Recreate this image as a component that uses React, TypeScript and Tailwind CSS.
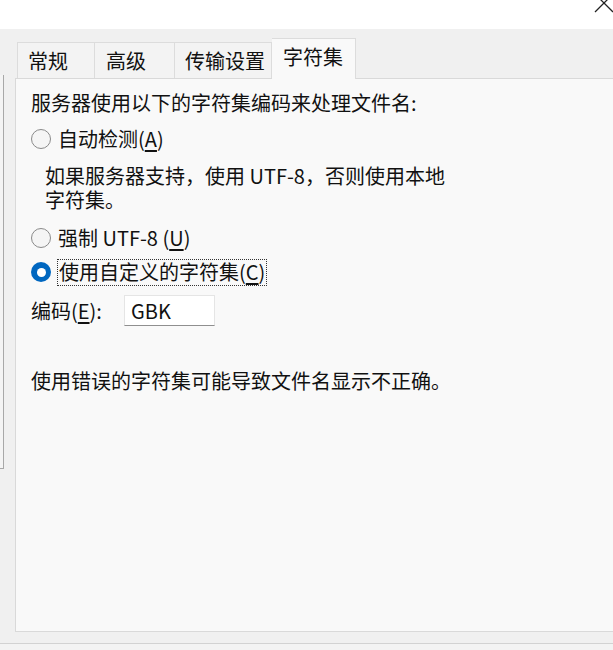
import React from "react";

const font = { fontFamily: '"Noto Sans CJK SC", "Noto Sans", sans-serif' };

function Radio({ checked }: { checked?: boolean }) {
  if (checked) {
    return (
      <span className="w-[20px] h-[20px] rounded-full bg-[#0067c0] flex items-center justify-center shrink-0">
        <span className="w-[9px] h-[9px] rounded-full bg-white" />
      </span>
    );
  }
  return (
    <span className="w-[20px] h-[20px] rounded-full border border-[#8a8a8a] bg-[#f5f5f5] shrink-0" />
  );
}

export default function App() {
  return (
    <div
      className="w-[613px] h-[650px] bg-[#f0f0f0] overflow-hidden flex flex-col text-[20px] text-[#111] leading-[26px]"
      style={font}
    >
      {/* title bar */}
      <div className="h-[29px] bg-white flex justify-end shrink-0 overflow-hidden">
        <svg width="22" height="22" viewBox="0 0 22 22" className="-mt-[8px] mr-[-2px]">
          <path d="M2 2 L20 20 M20 2 L2 20" stroke="#222" strokeWidth="1.3" fill="none" />
        </svg>
      </div>

      <div className="flex flex-1">
        {/* left stub */}
        <div className="w-[15px] shrink-0">
          <div className="mt-[46px] w-[4px] h-[394px] border-r border-b border-[#a8a8a8] bg-[#f4f4f4]" />
        </div>

        {/* main */}
        <div className="flex-1 flex flex-col">
          {/* tabs */}
          <div className="flex items-end pt-[9px] pl-[2px] h-[49px] relative z-10">
            <div className="w-[78px] h-[36px] border border-b-0 border-[#dcdcdc] bg-[#f3f3f3] pl-[10px] flex items-center">
              常规
            </div>
            <div className="w-[80px] h-[36px] border border-l-0 border-b-0 border-[#dcdcdc] bg-[#f3f3f3] pl-[11px] flex items-center">
              高级
            </div>
            <div className="w-[97px] h-[36px] border border-l-0 border-b-0 border-[#dcdcdc] bg-[#f3f3f3] pl-[10px] flex items-center">
              传输设置
            </div>
            <div className="w-[84px] h-[41px] -mb-[1px] border border-l-0 border-b-0 border-[#dcdcdc] bg-[#f9f9f9] pl-[11px] flex items-center pb-[4px]">
              字符集
            </div>
          </div>

          {/* panel */}
          <div className="h-[554px] bg-[#f9f9f9] border border-r-0 border-[#d9d9d9] pl-[15px] flex flex-col">
            <div className="h-[28px] mt-[10px] flex items-center">
              服务器使用以下的字符集编码来处理文件名:
            </div>
            <div className="h-[28px] mt-[8px] flex items-center">
              <Radio />
              <span className="ml-[7px]">
                自动检测(<span className="underline underline-offset-[3px]">A</span>)
              </span>
            </div>
            <div className="mt-[11px] ml-[14px] w-[420px] flex flex-col leading-[24px]">
              <div className="h-[24px]">如果服务器支持，使用 UTF-8，否则使用本地</div>
              <div className="h-[24px]">字符集。</div>
            </div>
            <div className="h-[28px] mt-[12px] flex items-center">
              <Radio />
              <span className="ml-[7px]">
                强制 UTF-8 (<span className="underline underline-offset-[3px]">U</span>)
              </span>
            </div>
            <div className="h-[28px] mt-[6px] flex items-center">
              <Radio checked />
              <span className="ml-[6px] h-[27px] px-[1px] border border-dotted border-[#333] flex items-center">
                使用自定义的字符集(<span className="underline underline-offset-[3px]">C</span>)
              </span>
            </div>
            <div className="h-[31px] mt-[9px] flex items-center">
              <span className="w-[93px]">
                编码(<span className="underline underline-offset-[3px]">E</span>):
              </span>
              <div className="w-[91px] h-[31px] bg-white border border-[#e5e5e5] border-b-[#8f8f8f] pl-[6px] flex items-center">
                GBK
              </div>
            </div>
            <div className="h-[28px] mt-[41px] flex items-center">
              使用错误的字符集可能导致文件名显示不正确。
            </div>
          </div>

          <div className="h-[11px]" />
        </div>
      </div>

      {/* bottom line */}
      <div className="h-[1px] bg-[#d2d2d2] shrink-0" />
      <div className="h-[7px] bg-[#f3f3f3] shrink-0" />
    </div>
  );
}
